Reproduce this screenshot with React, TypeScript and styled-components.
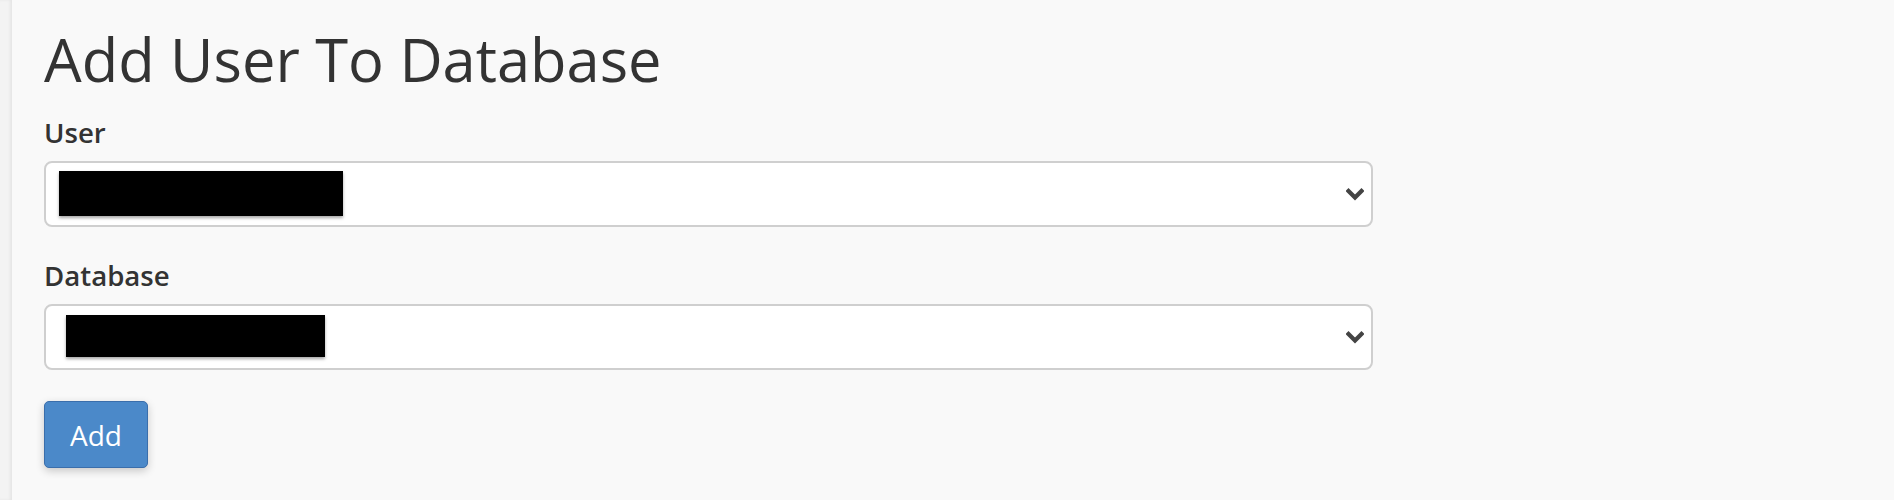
import React from "react";
import styled, { createGlobalStyle } from "styled-components";

const GlobalStyle = createGlobalStyle`
  html, body {
    margin: 0;
    padding: 0;
    background: #f9f9f9;
  }
  body {
    font-family: "Open Sans", "Noto Sans", "Liberation Sans", sans-serif;
    color: #333;
  }
`;

const Page = styled.div`
  display: flex;
  min-height: 500px;
  background: #f9f9f9;
`;

const SideStrip = styled.div`
  width: 12px;
  flex: none;
  background: #f3f3f3;
  box-shadow: inset -2px 0 3px rgba(0, 0, 0, 0.06);
`;

const Content = styled.main`
  flex: 1;
  padding: 25px 0 0 32px;
  display: flex;
  flex-direction: column;
  align-items: flex-start;
`;

const Title = styled.h1`
  margin: 0 0 21px;
  font-size: 59.6px;
  line-height: 68px;
  font-weight: 400;
  color: #333;
`;

const FormGroup = styled.div`
  display: flex;
  flex-direction: column;
  margin-bottom: 30px;
`;

const Label = styled.label`
  font-size: 27.6px;
  line-height: 36px;
  font-weight: 600;
  color: #333;
  margin-bottom: 11px;
`;

const SelectBox = styled.div`
  box-sizing: border-box;
  width: 1329px;
  height: 66px;
  background: #fff;
  border: 2px solid #cfcfcf;
  border-radius: 8px;
  display: flex;
  align-items: flex-start;
  justify-content: space-between;
  position: relative;
`;

const Redacted = styled.span<{ $w: number; $h: number; $x: number; $y: number }>`
  display: block;
  width: ${(p) => p.$w}px;
  height: ${(p) => p.$h}px;
  margin-left: ${(p) => p.$x}px;
  margin-top: ${(p) => p.$y}px;
  background: #000;
  box-shadow: 0 2px 3px rgba(0, 0, 0, 0.35);
`;

const Chevron = styled.svg`
  width: 18px;
  height: 13px;
  align-self: center;
  margin-right: 7px;
`;

const Button = styled.button`
  box-sizing: border-box;
  width: 104px;
  height: 67px;
  margin-top: 1px;
  background: #4b89c9;
  border: 1px solid #3a6eab;
  border-radius: 5px;
  color: #fff;
  font-family: "Open Sans", "Noto Sans", "Liberation Sans", sans-serif;
  font-size: 28px;
  font-weight: 400;
  box-shadow: 0 3px 9px rgba(0, 0, 0, 0.2);
  cursor: pointer;
`;

const ChevronIcon = () => (
  <Chevron viewBox="0 0 18 13">
    <polyline
      points="2.5,3 9,9.5 15.5,3"
      fill="none"
      stroke="#444"
      strokeWidth="4.2"
      strokeLinecap="square"
    />
  </Chevron>
);

export default function App() {
  return (
    <>
      <GlobalStyle />
      <Page>
        <SideStrip />
        <Content>
          <Title>Add User To Database</Title>
          <FormGroup>
            <Label>User</Label>
            <SelectBox role="combobox" aria-label="User">
              <Redacted $w={284} $h={45} $x={13} $y={8} />
              <ChevronIcon />
            </SelectBox>
          </FormGroup>
          <FormGroup>
            <Label>Database</Label>
            <SelectBox role="combobox" aria-label="Database">
              <Redacted $w={259} $h={42} $x={20} $y={9} />
              <ChevronIcon />
            </SelectBox>
          </FormGroup>
          <Button>Add</Button>
        </Content>
      </Page>
    </>
  );
}
